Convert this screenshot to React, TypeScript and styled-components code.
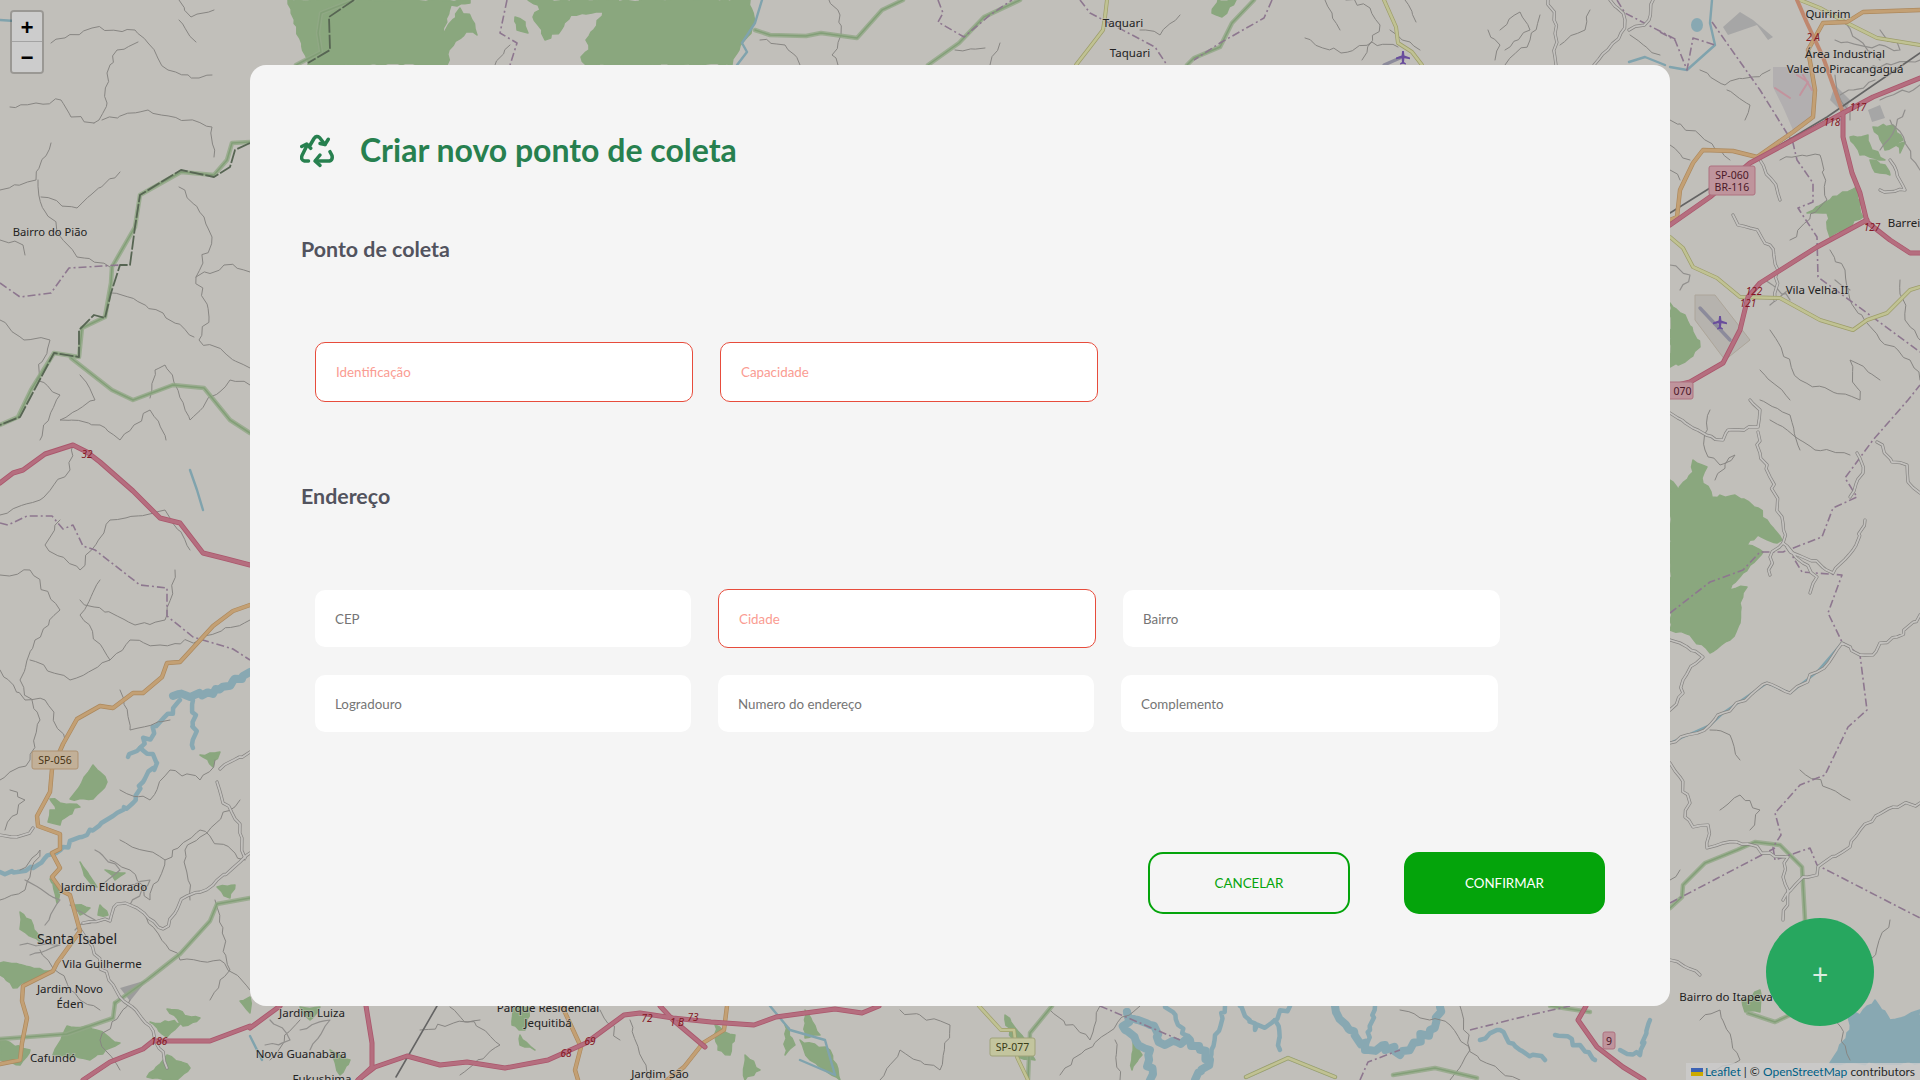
import React from 'react';
import styled, {createGlobalStyle} from "styled-components";

const GlobalStyle = createGlobalStyle`
    * {
        box-sizing: border-box;
    }

    html, body {
        margin: 0;
        height: 100%;
        overflow: hidden;
        font-family: "Lato", "Liberation Sans", sans-serif;
    }
`

// map data, traced by hand. Every line is "x,y x,y ..." in page pixels
const forests = [
    "288,0 308,65 447,65 449,50 461,38 466,32 477,35 472,20 460,8 443,33 451,5 470,3 470,0",
    "528,0 538,5 540,10 533,17 538,25 545,40 561,30 571,15 586,14 603,12 591,32 586,40 589,50 581,57 586,65 732,65 739,50 755,23 750,0",
    "515,17 525,22 528,33 517,30",
    "1218,0 1236,0 1222,17 1212,13",
    "1670,480 1678,490 1693,472 1693,460 1707,467 1702,478 1712,497 1735,495 1758,508 1767,520 1782,540 1777,543 1758,535 1747,545 1763,552 1743,573 1730,590 1747,587 1740,603 1740,623 1730,640 1710,653 1690,635 1670,630",
    "1670,303 1685,315 1700,347 1685,362 1670,367",
    "1807,213 1830,200 1857,187 1863,217 1830,237 1827,213",
    "1873,127 1893,125 1903,140 1885,150",
    "1850,137 1868,135 1872,150 1885,160 1860,155",
    "1870,160 1885,165 1890,175 1875,172",
    "1896,145 1905,142 1900,153",
    "0,963 30,967 50,971 33,980 13,988 0,975",
    "93,765 107,782 93,799 70,799 80,786",
    "50,799 80,807 60,820",
    "50,810 67,808 60,825 48,822",
    "20,912 33,925 40,942 20,929",
    "87,1026 120,1043 90,1060 53,1055 67,1026",
    "167,1009 200,1018 183,1026",
    "150,1022 183,1022 167,1037",
    "167,1055 190,1068 177,1080 147,1077",
    "240,1001 250,997 250,1013",
    "217,887 235,885 230,898",
    "200,755 220,752 213,767",
    "50,879 60,890 57,903",
    "80,862 97,887 88,880",
    "105,870 125,873 115,880",
    "75,905 90,908 80,915",
    "100,905 108,915 98,915",
    "0,1040 30,1050 20,1065 0,1060",
    "300,1007 320,1007 310,1020",
    "515,1007 530,1007 525,1030 512,1025",
    "520,1035 535,1050 520,1045",
    "330,1050 350,1060 340,1075",
    "745,1055 760,1070 745,1080",
    "715,1025 735,1035 730,1055 718,1050",
    "785,1025 795,1045 785,1055",
    "805,1010 820,1035 805,1038",
    "800,1040 830,1050 840,1080 810,1060",
    "1005,1015 1025,1040 1035,1060 1015,1055",
    "1742,1000 1760,990 1760,1012 1745,1012",
    "1133,1040 1142,1055 1132,1070",
]

const lakes = [
    "1843,1000 1860,1015 1875,1000 1890,1020 1920,1010 1920,1063 1830,1063 1850,1030",
]

const lakeBodies = [
    "173,696 190,697 213,694 233,681 250,672",
    "1127,1012 1150,1025 1165,1045 1190,1040 1210,1060 1195,1080",
    "1127,1012 1125,1030 1150,1050 1150,1080",
    "1335,1006 1350,1030 1365,1050 1385,1045 1400,1055 1430,1030 1440,1007",
]

const lakeArms = [
    "193,700 196,715 193,748",
    "180,700 160,722 140,748 128,757",
    "140,748 157,763 143,782 133,803 113,816 87,835 63,847 33,868 0,872",
    "1165,1006 1178,1025 1190,1040",
    "1225,1006 1215,1035 1210,1060",
    "1240,1006 1255,1030 1275,1020 1290,1006",
    "1275,1020 1280,1050",
    "1375,1006 1370,1030 1365,1050",
    "1480,1040 1500,1030 1520,1050 1545,1060",
    "1555,1035 1580,1045 1595,1060",
    "1620,1050 1640,1055 1650,1020",
]

const streams = [
    "1670,67 1687,70 1715,45 1710,23 1712,0",
    "762,0 755,23 742,43 747,52 737,65",
    "1629,62 1645,57 1665,65",
    "1670,743 1710,725 1723,713 1767,683 1790,693 1817,672 1842,643",
    "1076,65 1090,47 1103,30",
    "190,470 197,490 203,510",
    "0,20 30,22",
    "770,1006 790,1030 825,1040 835,1075 800,1060",
    "250,1036 262,1060",
]

const greenBorders = [
    "250,142 232,143 227,160 214,175 181,172 140,195 135,227 112,267 111,283 105,317 82,328 79,357 54,353 31,390 18,417 0,425",
    "71,358 112,390 133,400 173,385 204,388 230,420 250,433",
    "354,0 321,13 318,33 321,52 296,65",
    "755,30 770,35 806,36 821,33 857,38 882,10 903,0",
    "928,65 959,43 984,17 1020,0",
    "1254,0 1232,23 1220,47 1194,58 1187,65",
    "115,1003 147,980 180,954 210,921 217,904 250,898",
    "115,1003 113,1018 67,1034 0,1039",
    "1670,908 1682,897 1683,885 1705,863 1737,850 1755,842 1780,845 1802,867 1805,920",
    "1748,1013 1775,1022 1790,1015",
    "1052,1006 1030,1033 1028,1080",
    "1246,1077 1288,1058 1335,1077",
    "1393,1075 1435,1068 1477,1078",
    "1550,1006 1590,1012",
]

const darkBorders = [
    "250,143 235,150 230,167 214,177 181,170 140,195 135,227 130,265 120,265 111,293 105,318 94,315 79,330 79,357 54,353 20,417 0,425",
    "354,0 329,17 330,50 308,63",
]

const adminLines = [
    "0,283 20,297 51,293 69,268 120,265",
    "0,523 8,525 27,516 52,516 63,529 73,525 83,546 95,550 140,585 167,588 167,616 193,637 233,649 250,660",
    "507,0 500,33 517,43 510,65",
    "938,0 943,13 938,22 964,37 990,15 1012,0",
    "1080,0 1090,13 1155,47 1167,65",
    "1272,0 1264,18 1220,43 1194,60",
    "1617,0 1625,13 1677,40",
    "1660,32 1675,40 1687,70 1693,38 1715,45",
    "1712,22 1760,90 1793,143 1797,160 1813,183 1813,202 1798,208 1817,237 1818,277 1920,352",
    "1670,613 1710,582 1743,570 1760,552 1783,552 1822,537 1833,508 1857,497 1845,478 1873,440 1908,400 1920,385",
    "1787,547 1802,572 1842,575 1828,613 1842,642 1860,655 1867,710 1848,727 1825,775 1800,785 1775,813 1781,835 1773,847 1775,860 1810,848 1817,865 1920,918",
    "1670,903 1775,848",
    "1470,1030 1530,1015 1570,1006",
    "1360,1080 1368,1062 1400,1050",
    "1100,1006 1180,1040",
]

const motorways = [
    "0,483 13,473 23,470 45,454 73,445 87,452 100,462 133,491 160,518 180,523 203,553 227,559 250,565",
    "83,1080 110,1062 143,1049 153,1041 210,1041 250,1026",
    "280,1006 250,1028",
    "366,1006 372,1043 372,1067 358,1080",
    "358,1080 375,1067 407,1056 440,1065 467,1062 505,1068 548,1060 586,1043 624,1015 640,1013 673,1018 711,1022 754,1025 776,1017 835,1009 862,1013 879,1006",
    "660,1006 673,1020 705,1047",
    "1586,1006 1578,1020 1597,1047 1623,1067 1644,1080",
    "1670,225 1710,197 1750,163 1843,113 1873,97 1920,78",
    "1843,113 1843,137 1852,173 1860,193 1867,222 1890,240 1910,253 1920,253",
    "1867,220 1817,247 1760,283 1748,297 1740,330 1723,363 1690,382 1670,387",
]

const primaries = [
    "250,605 233,611 213,626 180,662 167,663 162,677 143,693 133,693 113,708 100,706 77,719 63,744 52,769 50,792 37,816 38,826 60,834 60,849 52,853 60,868 52,877 62,891 70,895 80,931 57,963 53,971 23,986 22,1001 27,1018 22,1043 20,1060 0,1064",
    "727,1006 724,1030 703,1043 684,1067 667,1080",
    "562,1006 581,1047 575,1070 578,1080",
    "1670,220 1677,217 1680,190 1693,163 1703,150 1733,151 1757,157 1793,132 1813,117 1815,90 1808,50 1823,23 1847,22 1863,12 1920,10",
]

const salmonRoads = ["1797,0 1807,23 1823,57 1843,113"]

const secondaries = [
    "1107,0 1105,17 1103,30 1090,47 1076,65",
    "1384,0 1396,27 1398,43 1412,52 1422,65",
    "1800,0 1820,8 1847,23 1877,38 1920,45",
    "1670,237 1683,248 1693,267 1717,278 1740,297 1780,298 1820,320 1853,330 1867,320 1887,313 1910,290 1920,287",
    "979,1006 1001,1030 1014,1030 1017,1057 1028,1080",
    "1246,1077 1288,1058 1335,1077",
]

const railways = [
    "1670,213 1750,163 1827,117 1920,53",
    "437,1006 396,1077",
]

const whiteRoads = [
    "1750,400 1760,410 1758,427 1728,430 1723,440 1693,428 1670,413",
    "1758,432 1760,453 1770,477 1783,523 1783,543 1770,557 1770,575",
    "1783,543 1803,563 1817,577 1810,593",
    "1787,547 1833,573 1853,550 1865,520",
    "1857,453 1863,473 1850,497",
    "1670,743 1710,725 1723,713 1767,683 1790,693 1817,672 1842,643 1860,655 1873,655 1880,643 1897,637 1920,615",
    "1670,710 1683,693 1683,680 1703,657 1680,643 1670,640",
    "1670,763 1680,777 1690,803 1685,817 1693,827 1708,825 1707,848 1737,842 1770,853 1788,857 1783,877 1788,890 1783,920",
    "1783,900 1803,877 1817,875 1823,863 1850,847 1860,830 1893,807 1920,803",
    "1877,442 1892,462 1907,465 1908,482 1920,493",
    "1733,215 1738,225 1750,228 1770,245 1778,270 1775,300",
    "1548,0 1554,20 1556,65",
    "1610,0 1625,20 1621,33 1594,65",
    "1653,0 1649,20 1629,30",
    "0,835 17,837 33,828",
    "83,923 110,921 117,904 137,908 163,929 187,896 213,885 233,868 250,853",
    "217,782 223,803 240,824 245,858",
    "220,769 250,752",
    "80,929 117,992 150,1026 167,1068",
    "1760,160 1780,200",
    "1880,190 1905,190 1890,160",
    "1670,960 1700,975",
]

const thinLines = [
    "51,43 92,28 135,30 148,43 168,70 199,78 212,75",
    "179,0 191,17 214,10",
    "179,20 196,42",
    "138,42 117,50 107,73 107,103 99,120 94,123",
    "102,120 148,110 212,127 214,157",
    "10,107 36,103 61,100 71,117 94,123",
    "0,190 36,180 51,143",
    "120,172 77,208 41,197",
    "38,180 46,213 77,257 110,267",
    "179,187 204,217 212,237 196,277 209,317 199,340 250,368",
    "250,272 224,265 196,277",
    "112,293 163,313 194,337",
    "0,240 23,245 25,255",
    "0,320 24,340 50,340 36,380 60,395 40,440",
    "80,375 95,400 60,420 100,425 120,440 150,410 166,440",
    "150,398 155,370 165,365 190,420 230,380 250,385",
    "0,515 40,500 70,470 73,445",
    "60,520 45,545 80,570 110,520 165,510 190,550",
    "0,575 30,570 60,610 35,640 20,680 40,720 30,760 0,780",
    "100,580 80,615 110,660 70,680 30,660",
    "80,600 135,625 165,620 175,570",
    "110,660 130,640 160,645 200,640 250,620",
    "0,670 25,700 45,700 65,740",
    "170,720 130,730 120,690",
    "120,790 150,800 170,770 200,780 215,760",
    "120,840 165,860 200,830 245,860",
    "165,860 150,900 130,870 110,860",
    "190,900 185,850 240,800",
    "5,830 25,800 10,790",
    "140,910 180,960 220,960 250,990",
    "215,900 230,970 210,1000",
    "0,900 25,890 40,850 20,870",
    "40,950 80,1000 100,1010",
    "130,1000 100,1040 120,1070",
    "1305,38 1341,53 1372,42 1398,47",
    "1346,0 1370,8 1380,25 1362,60",
    "1405,0 1416,22",
    "1488,30 1500,45 1495,60",
    "1500,30 1520,12 1530,30 1505,50",
    "1540,15 1530,40 1505,65",
    "1560,45 1585,30 1590,10",
    "1390,30 1410,42 1420,50",
    "1325,0 1340,30",
    "829,0 840,15 841,35 832,55 838,65",
    "1000,43 990,65",
    "1140,30 1160,35 1180,15",
    "1630,35 1660,55",
    "760,40 785,45 800,65",
    "955,50 985,48",
    "510,45 495,65",
    "1670,120 1700,135 1730,160",
    "1670,145 1690,160",
    "1727,90 1750,105 1745,120",
    "1700,70 1725,85 1770,70",
    "1780,160 1820,155 1827,200 1790,240",
    "1670,170 1680,180",
    "1830,250 1845,270 1850,300 1880,340 1910,360 1920,380",
    "1900,280 1905,320 1920,340",
    "1770,330 1800,380 1860,400 1850,360 1880,380",
    "1760,370 1790,400",
    "1710,410 1705,450 1720,465 1735,455 1715,480",
    "1770,420 1800,440 1815,450 1850,455",
    "1710,730 1730,735 1740,760",
    "1720,810 1740,795 1760,810 1750,830",
    "1760,400 1790,415 1800,450",
    "1670,880 1680,870",
    "1850,800 1800,770",
    "1870,960 1890,920",
    "1830,1000 1850,1060",
    "1700,1020 1720,1010 1740,1060 1700,1075",
    "1400,1010 1450,1025 1480,1060 1520,1080",
    "1460,1006 1470,1050 1450,1080",
    "1050,1010 1090,1040 1100,1006",
    "1115,1040 1120,1080",
    "1140,1006 1085,1050 1060,1075",
    "900,1010 950,1025 940,1070 900,1050 880,1080",
    "630,1020 650,1080",
    "450,1007 500,1045 460,1075",
    "420,1030 480,1020",
    "300,1020 270,1060",
    "600,1010 620,1040",
]

const sprawl = [
    "25,880 60,900 45,925", "70,905 95,920 75,930", "95,850 120,870 100,890", "120,885 150,880 130,905",
    "20,945 60,945 30,955", "1835,40 1900,50 1880,30", "1840,20 1880,60", "1860,70 1920,60",
    "1835,75 1850,120", "1840,95 1875,80", "1880,100 1920,85", "1890,120 1920,170", "1905,110 1880,150",
    "1670,265 1690,275 1680,290", "1765,280 1790,300", "1770,305 1790,290", "300,1030 330,1020 310,1050",
    "270,1020 290,1040 265,1045", "1835,280 1850,290",
]

const placeNames = [
    {x: 50, y: 236, size: 11.2, text: "Bairro do Pião"},
    {x: 104, y: 891, size: 11.5, text: "Jardim Eldorado"},
    {x: 77, y: 944, size: 14, text: "Santa Isabel"},
    {x: 102, y: 968, size: 11.5, text: "Vila Guilherme"},
    {x: 70, y: 993, size: 11.5, text: "Jardim Novo"},
    {x: 70, y: 1008, size: 11.5, text: "Éden"},
    {x: 53, y: 1062, size: 11.5, text: "Cafundó"},
    {x: 312, y: 1017, size: 11.5, text: "Jardim Luiza"},
    {x: 548, y: 1012, size: 11.5, text: "Parque Residencial"},
    {x: 548, y: 1027, size: 11.5, text: "Jequitibá"},
    {x: 301, y: 1058, size: 11.5, text: "Nova Guanabara"},
    {x: 322, y: 1083, size: 11.5, text: "Fukushima"},
    {x: 660, y: 1078, size: 11.5, text: "Jardim São"},
    {x: 1123, y: 27, size: 11.5, text: "Taquari"},
    {x: 1130, y: 57, size: 11.5, text: "Taquari"},
    {x: 1828, y: 18, size: 11.5, text: "Quiririm"},
    {x: 1845, y: 58, size: 11.5, text: "Área Industrial"},
    {x: 1845, y: 73, size: 11.5, text: "Vale do Piracangaguá"},
    {x: 1817, y: 294, size: 11.5, text: "Vila Velha II"},
    {x: 1904, y: 227, size: 11.5, text: "Barrei"},
    {x: 1726, y: 1001, size: 11.5, text: "Bairro do Itapeva"},
]

const junctions = [
    {x: 87, y: 458, text: "32"},
    {x: 647, y: 1022, text: "72"},
    {x: 693, y: 1021, text: "73"},
    {x: 677, y: 1026, text: "1 B"},
    {x: 590, y: 1045, text: "69"},
    {x: 566, y: 1057, text: "68"},
    {x: 159, y: 1045, text: "186"},
    {x: 1813, y: 41, text: "2 A"},
    {x: 1858, y: 111, text: "117"},
    {x: 1832, y: 126, text: "118"},
    {x: 1872, y: 231, text: "127"},
    {x: 1754, y: 295, text: "122"},
    {x: 1748, y: 307, text: "121"},
]

const shields = [
    {x: 32, y: 751, w: 46, h: 18, fill: "#f3dcbe", stroke: "#d9b88f", color: "#5c4520", lines: ["SP-056"]},
    {x: 990, y: 1038, w: 45, h: 18, fill: "#f4f7c6", stroke: "#c9cc98", color: "#4b4d1e", lines: ["SP-077"]},
    {x: 1603, y: 1032, w: 12, h: 17, fill: "#efb9c4", stroke: "#d98ea0", color: "#5e1f33", lines: ["9"]},
    {x: 1709, y: 166, w: 46, h: 29, fill: "#efb9c4", stroke: "#d98ea0", color: "#5e1f33", lines: ["SP-060", "BR-116"]},
    {x: 1660, y: 382, w: 33, h: 17, fill: "#efb9c4", stroke: "#d98ea0", color: "#5e1f33", lines: ["", "070"]},
]

// breaks a straight traced line into little bends, the way streams and woods look on the map
const wiggle = (line: string, seed: number, step = 7, amount = 5, closed = false) => {
    let state = seed * 7919 + 13
    const next = () => {
        state = (state * 16807) % 2147483647
        return (state % 1000) / 1000 - 0.5
    }
    const points = line.split(" ").map(p => p.split(",").map(Number))
    if (closed) points.push(points[0])
    const out: string[] = []
    points.forEach((p, i) => {
        out.push(`${p[0]},${p[1]}`)
        const q = points[i + 1]
        if (!q) return
        const steps = Math.max(1, Math.round(Math.hypot(q[0] - p[0], q[1] - p[1]) / step))
        for (let s = 1; s < steps; s++) {
            const t = s / steps
            out.push(`${(p[0] + (q[0] - p[0]) * t + next() * amount).toFixed(1)},${(p[1] + (q[1] - p[1]) * t + next() * amount).toFixed(1)}`)
        }
    })
    return out.join(" ")
}

const patch = (line: string, seed: number) => wiggle(line, seed, 5, 3.5, true)

type LinesPropsType = {
    lines: string[]
    color: string
    width: number
    opacity?: number
    dash?: string
}

const Lines = (props: LinesPropsType) => (
    <g fill="none" stroke={props.color} strokeWidth={props.width} strokeOpacity={props.opacity}
       strokeDasharray={props.dash} strokeLinejoin="round" strokeLinecap={props.dash ? "butt" : "round"}>
        {props.lines.map((line, i) => <polyline key={i} points={line}/>)}
    </g>
)

const Airplane = (props: { x: number, y: number }) => (
    <path transform={`translate(${props.x} ${props.y})`} fill="#8461c4"
          d="M-.9-7h1.8l.5 4.600L7-.4v1.600L1.400.2 1 4l2 1.400v1.100L0 5.800l-3 .7V5.400L-1 4l-.4-3.800L-7 1.200V-.4l5.600-2z"/>
)

const OsmMap = () => (
    <MapSvg viewBox="0 0 1920 1080">
        <rect width="1920" height="1080" fill="#f2efe9"/>

        {/* terreno */}
        <polygon points="1723,27 1740,12 1753,20 1773,37 1768,40 1757,25 1728,35" fill="#d0d0d0"/>
        <polygon points="1773,67 1813,67 1813,120 1793,130 1783,107 1773,87" fill="#dfdbdd"/>
        <polygon points="1695,295 1715,295 1750,340 1725,360 1695,320" fill="#e4e0da" stroke="#d8cfc0"/>
        <polygon points="120,988 147,980 130,1001" fill="#c4c4c4"/>
        <polygon points="1868,110 1880,105 1885,118 1872,122" fill="#d0d0d0"/>
        <polygon points="1835,85 1850,100 1845,115 1830,100" fill="#d0d0d0"/>
        <g fill="#add19e" stroke="#add19e" strokeWidth="1.5" strokeLinejoin="round">
            {forests.map((points, i) => <polygon key={i} points={patch(points, i + 1)}/>)}
        </g>
        <g fill="#aad3df" stroke="#aad3df" strokeWidth="1.5" strokeLinejoin="round">
            {lakes.map((points, i) => <polygon key={i} points={patch(points, i + 50)}/>)}
        </g>
        <ellipse cx="1697" cy="25" rx="6" ry="7" fill="#aad3df"/>
        <Lines lines={lakeBodies.map((line, i) => wiggle(line, i + 3, 5, 7))} color="#aad3df" width={8}/>
        <Lines lines={lakeArms.map((line, i) => wiggle(line, i + 9, 5, 6))} color="#aad3df" width={4.5}/>
        <Lines lines={["1797,75 1808,82 1800,95", "1775,88 1790,98", "1803,75 1812,90"]} color="#f3b8c5" width={2}/>

        {/* rios e caminhos */}
        <Lines lines={thinLines.map((line, i) => wiggle(line, i + 1))} color="#a9a7a3" width={1}/>
        <Lines lines={sprawl.map((line, i) => wiggle(line, i + 1))} color="#b5b3b0" width={1.2}/>
        <Lines lines={streams} color="#a0ccd9" width={2.4}/>

        {/* limites */}
        <Lines lines={greenBorders} color="#b5d2a8" width={4.5} opacity={0.8}/>
        <Lines lines={greenBorders} color="#a3c795" width={1.5}/>
        <Lines lines={darkBorders} color="#6d7f68" width={1.8} dash="14 2"/>
        <Lines lines={adminLines} color="#b195b3" width={1.6} dash="8 3 2 3"/>

        {/* estradas */}
        <Lines lines={railways} color="#7e7e7e" width={1.6}/>
        <Lines lines={whiteRoads.map((line, i) => wiggle(line, i + 1))} color="#a8a6a3" width={3.2}/>
        <Lines lines={whiteRoads.map((line, i) => wiggle(line, i + 1))} color="#f4f2ee" width={1.8}/>
        <Lines lines={secondaries} color="#c4c585" width={4}/>
        <Lines lines={secondaries} color="#f1f3b8" width={2.6}/>
        <Lines lines={primaries} color="#d8ab74" width={4.4}/>
        <Lines lines={primaries} color="#f4c892" width={3}/>
        <Lines lines={salmonRoads} color="#efa98a" width={4}/>
        <Lines lines={motorways} color="#d56d88" width={5}/>
        <Lines lines={motorways} color="#e38a9f" width={3.4}/>
        <Lines lines={["1384,65 1400,58", "1700,308 1730,340"]} color="#b0aec2" width={3.4}/>
        <Airplane x={1403} y={58}/>
        <Airplane x={1720} y={323}/>

        {shields.map((shield, i) => (
            <g key={i} textAnchor="middle" fontFamily="Noto Sans, sans-serif" fontSize="10.5" fill={shield.color}>
                <rect x={shield.x} y={shield.y} width={shield.w} height={shield.h} rx="2"
                      fill={shield.fill} stroke={shield.stroke}/>
                {shield.lines.map((line, n) => (
                    <text key={n} x={shield.x + shield.w / 2 + (line === "070" ? 6 : 0)} y={shield.y + (line === "070" ? 13 : 13 + n * 12)}>{line}</text>
                ))}
            </g>
        ))}
        {junctions.map((mark, i) => (
            <text key={i} x={mark.x} y={mark.y} textAnchor="middle" fontFamily="Noto Sans, sans-serif" fontSize="10"
                  fontStyle="italic" fill="#a51d2d">{mark.text}</text>
        ))}
        {placeNames.map((place, i) => (
            <text key={i} x={place.x} y={place.y} textAnchor="middle" fontFamily="Noto Sans, sans-serif"
                  fontSize={place.size} fill="#2b2b2b" stroke="#f2efe9" strokeWidth="2" strokeOpacity="0.5"
                  paintOrder="stroke">{place.text}</text>
        ))}
    </MapSvg>
)

const RecycleIcon = () => (
    <RecycleSvg viewBox="0 0 35 35">
        <path d="M10.5 11.5 14 5.5Q16.5 2 19.5 4.5L25 11.5"/>
        <path d="M20 10.5 25 11.5 28.3 6.3"/>
        <path d="M8.5 28H4.5Q.5 27 2 22.5L6.7 13"/>
        <path d="M1.7 13.5 6.7 11 10.7 15.3"/>
        <path d="M30 18.7 32 22.5Q33 27 29.5 28H16"/>
        <path d="M20 22 15 28 20 32.3"/>
    </RecycleSvg>
)

type FieldPropsType = {
    placeholder: string
    invalid?: boolean
}

const Field = (props: FieldPropsType) => <Input type="text" placeholder={props.placeholder} $invalid={props.invalid}/>

const App = () => {
    return (
        <Page>
            <GlobalStyle/>
            <OsmMap/>

            <ZoomControl>
                <ZoomButton>+</ZoomButton>
                <ZoomButton>−</ZoomButton>
            </ZoomControl>

            <Attribution>
                <Flag viewBox="0 0 12 8">
                    <rect width="12" height="4" fill="#4C7BE1"/>
                    <rect y="4" width="12" height="4" fill="#FFD500"/>
                </Flag>
                <a href="#">Leaflet</a> | © <a href="#">OpenStreetMap</a> contributors
            </Attribution>

            <Overlay>
                <Modal>
                    <Header>
                        <RecycleIcon/>
                        <Title>Criar novo ponto de coleta</Title>
                    </Header>

                    <SectionTitle>Ponto de coleta</SectionTitle>
                    <Rows>
                        <TallRow>
                            <Field placeholder="Identificação" invalid/>
                            <Field placeholder="Capacidade" invalid/>
                        </TallRow>
                    </Rows>

                    <AddressTitle>Endereço</AddressTitle>
                    <Rows>
                        <Row>
                            <Field placeholder="CEP"/>
                            <Field placeholder="Cidade" invalid/>
                            <Field placeholder="Bairro"/>
                        </Row>
                        <Row>
                            <Field placeholder="Logradouro"/>
                            <Field placeholder="Numero do endereço"/>
                            <Field placeholder="Complemento"/>
                        </Row>
                    </Rows>

                    <Actions>
                        <ActionButton type="button">Cancelar</ActionButton>
                        <ActionButton type="button" $primary>Confirmar</ActionButton>
                    </Actions>
                </Modal>
            </Overlay>

            <AddButton type="button">+</AddButton>
        </Page>
    );
};

export default App;

const Page = styled.div`
    position: relative;
    width: 1920px;
    height: 1080px;
    overflow: hidden;
`

const MapSvg = styled.svg`
    position: absolute;
    inset: 0;
    width: 1920px;
    height: 1080px;
`

const ZoomControl = styled.div`
    position: absolute;
    top: 10px;
    left: 10px;
    border: 2px solid rgba(0, 0, 0, 0.2);
    border-radius: 4px;
    background-clip: padding-box;
`

const ZoomButton = styled.a`
    display: block;
    width: 30px;
    height: 30px;
    overflow: hidden;
    background: #fff;
    border-bottom: 1px solid #ccc;
    color: #000;
    font: bold 22px/35px "Lucida Console", "Liberation Mono", monospace;
    text-align: center;

    &:first-child {
        border-radius: 2px 2px 0 0;
    }

    &:last-child {
        border-bottom: none;
        border-radius: 0 0 2px 2px;
    }
`

const Attribution = styled.div`
    position: absolute;
    right: 0;
    bottom: 0;
    padding: 0 5px;
    background: rgba(255, 255, 255, 0.8);
    color: #333;
    font-size: 12px;
    line-height: 17px;

    a {
        color: #0078a8;
        text-decoration: none;
    }
`

const Flag = styled.svg`
    display: inline-block;
    width: 12px;
    height: 8px;
    margin-right: 2px;
`

const Overlay = styled.div`
    position: absolute;
    inset: 0;
    display: flex;
    justify-content: center;
    align-items: flex-start;
    padding-top: 65px;
    background: rgba(0, 0, 0, 0.2);
`

const Modal = styled.div`
    width: 1420px;
    height: 941px;
    padding: 67px 65px 0 51px;
    background: #f5f5f5;
    border-radius: 16px;
`

const Header = styled.header`
    display: flex;
    align-items: center;
    gap: 25px;
    height: 36px;
    margin-left: -1px;
    color: #27804f;
`

const RecycleSvg = styled.svg`
    flex-shrink: 0;
    width: 35px;
    height: 35px;
    fill: none;
    stroke: currentColor;
    stroke-width: 3.5;
    stroke-linecap: round;
    stroke-linejoin: round;
`

const Title = styled.h1`
    margin: 0;
    font-size: 32px;
    font-weight: 700;
    line-height: 36px;
`

const SectionTitle = styled.h2`
    margin: 64px 0 0;
    height: 34px;
    color: #52535e;
    font-size: 21.4px;
    font-weight: 700;
    line-height: 34px;
`

const AddressTitle = styled(SectionTitle)`
    margin-top: 77px;
`

const Rows = styled.div`
    display: flex;
    flex-direction: column;
    gap: 27px;
    margin: 76px 0 0 14px;
`

const Row = styled.div`
    display: flex;
    align-items: center;
    gap: 27px;

    & > :nth-child(3) {
        width: 377px;
    }
`

const Input = styled.input<{ $invalid?: boolean }>`
    width: ${props => props.$invalid ? "378px" : "376px"};
    height: ${props => props.$invalid ? "59px" : "57px"};
    padding: 0 20px;
    background: #fff;
    border: ${props => props.$invalid ? "1px solid #e74c3c" : "0"};
    border-radius: 10px;
    outline: none;
    font-family: "Lato", sans-serif;
    font-size: 13.33px;

    &::placeholder {
        color: ${props => props.$invalid ? "#fa9c92" : "#757575"};
        opacity: 1;
    }
`

const TallRow = styled(Row)`
    ${Input} {
        height: 60px;
    }
`

const Actions = styled.div`
    display: flex;
    justify-content: flex-end;
    gap: 54px;
    margin-top: 120px;
`

const ActionButton = styled.button<{ $primary?: boolean }>`
    width: ${props => props.$primary ? "201px" : "202px"};
    height: 62px;
    background: ${props => props.$primary ? "#04a40b" : "transparent"};
    border: 2px solid #04a40b;
    border-radius: 15px;
    color: ${props => props.$primary ? "#fff" : "#04a40b"};
    font-family: "Lato", sans-serif;
    font-size: 13.33px;
    text-transform: uppercase;
`

const AddButton = styled.button`
    position: absolute;
    left: 1766px;
    top: 918px;
    width: 108px;
    height: 108px;
    padding: 4px 0 0;
    background: #27a75f;
    border: 0;
    border-radius: 50%;
    color: #dcebe0;
    font-family: "Lato", sans-serif;
    font-size: 28px;
`
